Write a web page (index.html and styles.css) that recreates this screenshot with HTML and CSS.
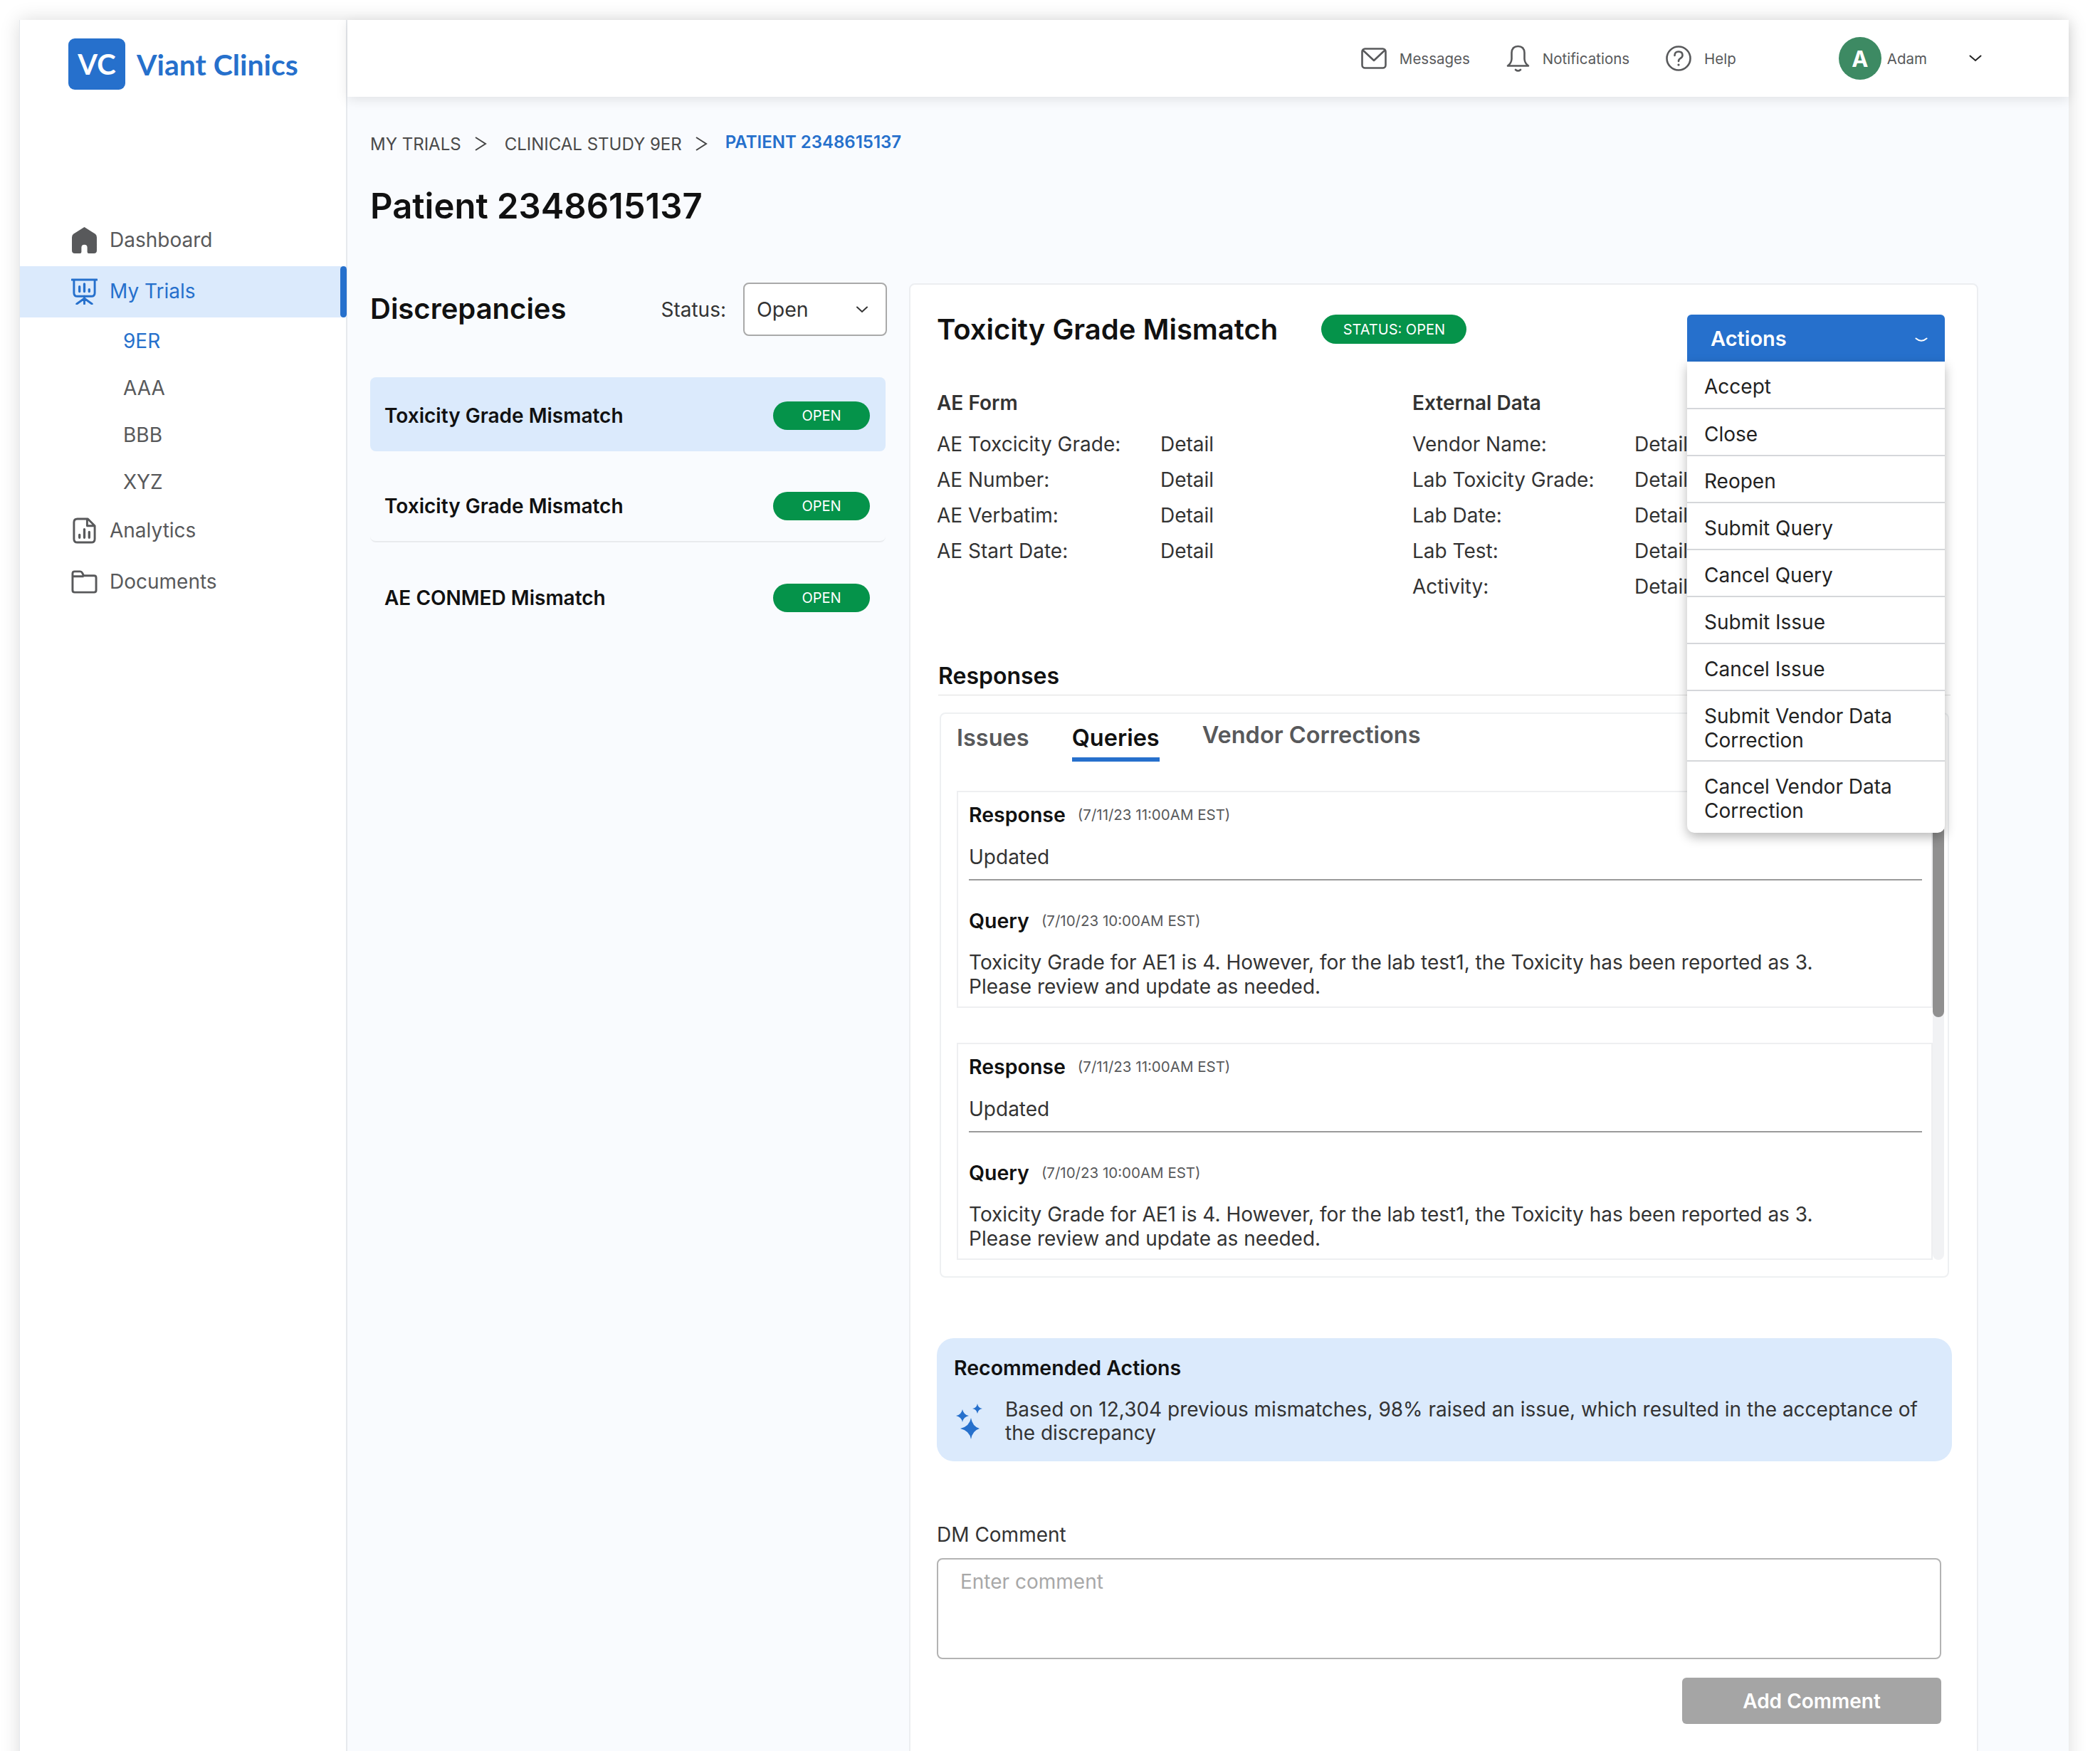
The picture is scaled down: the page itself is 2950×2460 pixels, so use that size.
FILE: index.html
```html
<!DOCTYPE html>
<html lang="en">
<head>
  <meta charset="UTF-8">
  <title>Viant Clinics - Patient 2348615137</title>
  <link rel="stylesheet" href="styles.css">
</head>
<body>
  <div class="frame">
    <!-- Sidebar -->
    <aside class="sidebar">
      <div class="logo">
        <span class="logo-mark">VC</span>
        <span class="logo-name">Viant Clinics</span>
      </div>
      <nav class="nav">
        <a class="nav-row">
          <svg class="nav-icon" viewBox="0 0 36 36"><path fill="#58595b" d="M18 0 L33 9.5 Q35 11 35 14 V32 Q35 36 31 36 H24 Q22 36 22 34 V28 Q22 24 18 24 Q14 24 14 28 V34 Q14 36 12 36 H5 Q1 36 1 32 V14 Q1 11 3 9.5 Z"/></svg>
          Dashboard
        </a>
        <a class="nav-row active">
          <svg class="nav-icon" viewBox="0 0 38 38" fill="none" stroke="#2670cc" stroke-width="3" stroke-linecap="round"><path d="M1 2 H37 M4 2 V21 Q4 26 9 26 H29 Q34 26 34 21 V2"/><path d="M19 26 V37 M19 29 L8 37 M19 29 L30 37"/><path stroke-width="3.4" d="M12 12 V19 M19 8 V19 M26 16 V19"/></svg>
          My Trials
        </a>
        <a class="sub-row current">9ER</a>
        <a class="sub-row">AAA</a>
        <a class="sub-row">BBB</a>
        <a class="sub-row">XYZ</a>
        <a class="nav-row">
          <svg class="nav-icon" viewBox="0 0 36 38" fill="none" stroke="#58595b" stroke-width="3" stroke-linejoin="round" stroke-linecap="round"><path d="M8 2 H23 L33 12 V31 Q33 36 28 36 H8 Q3 36 3 31 V7 Q3 2 8 2 Z M22 3 V12 H32"/><path stroke-width="3.4" d="M11 29 V25 M18 29 V17 M25 29 V21"/></svg>
          Analytics
        </a>
        <a class="nav-row">
          <svg class="nav-icon" viewBox="0 0 38 34" fill="none" stroke="#58595b" stroke-width="3" stroke-linejoin="round"><path d="M2 8 V5 Q2 2 5 2 H13 Q15 2 16 4 L18 8 H33 Q36 8 36 11 V29 Q36 32 33 32 H5 Q2 32 2 29 Z M2 9 H18"/></svg>
          Documents
        </a>
      </nav>
    </aside>

    <div class="main">
      <!-- Top bar -->
      <header class="topbar">
        <a class="top-link">
          <svg class="top-icon" width="36" height="30" viewBox="0 0 36 30" fill="none" stroke="#58595b" stroke-width="2.6" stroke-linejoin="round"><rect x="1.5" y="1.5" width="33" height="27" rx="4"/><path d="M2 3 L18 18 L34 3"/></svg>
          Messages
        </a>
        <a class="top-link">
          <svg class="top-icon" width="33" height="38" viewBox="0 0 33 38" fill="none" stroke="#58595b" stroke-width="2.6" stroke-linecap="round" stroke-linejoin="round"><path d="M16.5 2 Q8 2 7.5 11 V20 Q7 26 2 29.5 H31 Q26 26 25.5 20 V11 Q25 2 16.5 2 Z"/><path d="M13 35 Q16.5 38 20 35"/></svg>
          Notifications
        </a>
        <a class="top-link">
          <svg class="top-icon" width="36" height="36" viewBox="0 0 36 36" fill="none" stroke="#58595b" stroke-width="2.6" stroke-linecap="round"><circle cx="18" cy="18" r="16.5"/><path d="M12.5 14 Q12.5 8.5 18 8.5 Q23.5 8.5 23.5 13.5 Q23.5 16.5 20.5 18 Q18 19.5 18 22"/><path stroke-width="3.2" d="M18 27 V27.1"/></svg>
          Help
        </a>
        <div class="user">
          <span class="avatar">A</span>
          <span class="user-name">Adam</span>
          <svg width="18" height="10" viewBox="0 0 18 10" fill="none" stroke="#222" stroke-width="2" stroke-linecap="round"><path d="M1.5 1.5 L9 8 L16.5 1.5"/></svg>
        </div>
      </header>

      <main class="content">
        <div class="breadcrumb">
          <span>MY TRIALS</span>
          <svg class="crumb-sep" width="20" height="22" viewBox="0 0 20 22" fill="none" stroke="#444" stroke-width="2"><path d="M3 2 L17 11 L3 20"/></svg>
          <span>CLINICAL STUDY 9ER</span>
          <svg class="crumb-sep" width="20" height="22" viewBox="0 0 20 22" fill="none" stroke="#444" stroke-width="2"><path d="M3 2 L17 11 L3 20"/></svg>
          <span class="crumb-current">PATIENT 2348615137</span>
        </div>
        <h1 class="page-title">Patient 2348615137</h1>

        <div class="columns">
          <!-- Discrepancy list -->
          <section class="list-col">
            <div class="list-head">
              <h2 class="list-title">Discrepancies</h2>
              <span class="status-label">Status:</span>
              <div class="select">
                Open
                <svg width="18" height="10" viewBox="0 0 18 10" fill="none" stroke="#333" stroke-width="2" stroke-linecap="round"><path d="M2 1.5 L9 8 L16 1.5"/></svg>
              </div>
            </div>
            <div class="list">
              <div class="list-item selected"><span>Toxicity Grade Mismatch</span><span class="pill">OPEN</span></div>
              <div class="list-item ruled"><span>Toxicity Grade Mismatch</span><span class="pill">OPEN</span></div>
              <div class="list-item"><span>AE CONMED Mismatch</span><span class="pill">OPEN</span></div>
            </div>
          </section>

          <!-- Detail panel -->
          <section class="panel">
            <div class="panel-head">
              <h2 class="panel-title">Toxicity Grade Mismatch</h2>
              <span class="status-pill">STATUS: OPEN</span>
              <div class="actions">
                <div class="actions-btn">
                  Actions
                  <svg class="actions-chevron" width="18" height="8" viewBox="0 0 18 8" fill="none" stroke="#fff" stroke-width="2" stroke-linecap="round"><path d="M1.5 1.5 Q9 8 16.5 1.5"/></svg>
                </div>
                <ul class="actions-menu">
                  <li>Accept</li>
                  <li>Close</li>
                  <li>Reopen</li>
                  <li>Submit Query</li>
                  <li>Cancel Query</li>
                  <li>Submit Issue</li>
                  <li>Cancel Issue</li>
                  <li>Submit Vendor Data Correction</li>
                  <li>Cancel Vendor Data Correction</li>
                </ul>
              </div>
            </div>

            <div class="data">
              <div class="data-col ae">
                <h3 class="data-title">AE Form</h3>
                <dl class="data-rows">
                  <dt>AE Toxcicity Grade:</dt><dd>Detail</dd>
                  <dt>AE Number:</dt><dd>Detail</dd>
                  <dt>AE Verbatim:</dt><dd>Detail</dd>
                  <dt>AE Start Date:</dt><dd>Detail</dd>
                </dl>
              </div>
              <div class="data-col ext">
                <h3 class="data-title">External Data</h3>
                <dl class="data-rows">
                  <dt>Vendor Name:</dt><dd>Detail</dd>
                  <dt>Lab Toxicity Grade:</dt><dd>Detail</dd>
                  <dt>Lab Date:</dt><dd>Detail</dd>
                  <dt>Lab Test:</dt><dd>Detail</dd>
                  <dt>Activity:</dt><dd>Detail</dd>
                </dl>
              </div>
            </div>

            <h3 class="responses-title">Responses</h3>
            <div class="tabs-card">
              <div class="tabs">
                <span class="tab">Issues</span>
                <span class="tab on">Queries</span>
                <span class="tab vendor">Vendor Corrections</span>
              </div>
              <div class="thread-wrap">
                <div class="threads">
                  <article class="thread">
                    <div class="entry-head"><b>Response</b><span class="stamp">(7/11/23 11:00AM EST)</span></div>
                    <p class="entry-reply">Updated</p>
                    <div class="entry-head query"><b>Query</b><span class="stamp">(7/10/23 10:00AM EST)</span></div>
                    <p class="entry-body">Toxicity Grade for AE1 is 4. However, for the lab test1, the Toxicity has been reported as 3.<br>Please review and update as needed.</p>
                  </article>
                  <article class="thread">
                    <div class="entry-head"><b>Response</b><span class="stamp">(7/11/23 11:00AM EST)</span></div>
                    <p class="entry-reply">Updated</p>
                    <div class="entry-head query"><b>Query</b><span class="stamp">(7/10/23 10:00AM EST)</span></div>
                    <p class="entry-body">Toxicity Grade for AE1 is 4. However, for the lab test1, the Toxicity has been reported as 3.<br>Please review and update as needed.</p>
                  </article>
                </div>
                <div class="scroll-track"><div class="scroll-thumb"></div></div>
              </div>
            </div>

            <div class="recommend">
              <h3 class="recommend-title">Recommended Actions</h3>
              <div class="recommend-row">
                <svg class="sparkle" width="38" height="50" viewBox="0 0 38 50" fill="#2670cc"><path d="M9 8 Q10.5 15.5 18 17 Q10.5 18.5 9 26 Q7.5 18.5 0 17 Q7.5 15.5 9 8 Z"/><path d="M30 0 Q31 6 37 7 Q31 8 30 14 Q29 8 23 7 Q29 6 30 0 Z"/><path d="M21 20 Q23 32 33 35 Q23 38 21 50 Q19 38 6 35 Q19 32 21 20 Z"/></svg>
                <p>Based on 12,304 previous mismatches, 98% raised an issue, which resulted in the acceptance of the discrepancy</p>
              </div>
            </div>

            <label class="comment-label" for="dm-comment">DM Comment</label>
            <textarea class="comment-box" id="dm-comment" placeholder="Enter comment"></textarea>
            <div class="comment-foot"><span class="add-btn">Add Comment</span></div>
          </section>
        </div>
      </main>
    </div>
  </div>
</body>
</html>
```

FILE: styles.css
```css
/* Base */
* {
  margin: 0;
  padding: 0;
  box-sizing: border-box;
}
html, body {
  height: 100%;
  overflow: hidden;
  background: #fff;
  font-family: Inter, "Noto Sans", sans-serif;
  color: #333;
}

/* Outer app frame, runs past the bottom of the window */
.frame {
  display: flex;
  width: 2879px;
  height: 2500px;
  margin: 28px 0 0 27px;
  background: #f9fbfe;
  box-shadow: 0 0 26px rgba(0, 0, 0, 0.14);
}

/* Sidebar */
.sidebar {
  width: 461px;
  flex-shrink: 0;
  padding-top: 26px;
  background: #fff;
  border-right: 2px solid #e6e9ed;
  border-left: 1px solid #e6e9ed;
}
.logo {
  display: flex;
  align-items: center;
  gap: 16px;
  padding-left: 68px;
}
.logo-mark {
  display: flex;
  align-items: center;
  justify-content: center;
  width: 80px;
  height: 72px;
  border-radius: 9px;
  background: #2670cc;
  color: #fff;
  font-family: Lato, sans-serif;
  font-size: 40px;
  font-weight: 700;
}
.logo-name {
  color: #2670cc;
  font-family: Lato, sans-serif;
  font-size: 41px;
  font-weight: 700;
}
.nav {
  margin-top: 176px;
}
.nav-row {
  display: flex;
  align-items: center;
  height: 72px;
  padding: 0 0 2px 72px;
  font-size: 28px;
  color: #58595b;
}
.nav-icon {
  width: 37px;
  height: 37px;
  margin-right: 17px;
  flex-shrink: 0;
}
.nav-row.active {
  position: relative;
  margin-right: -1px;
  background: #dbeafc;
  color: #2670cc;
}
.nav-row.active::after {
  content: "";
  position: absolute;
  right: 0;
  top: 0;
  width: 9px;
  height: 100%;
  border-radius: 5px;
  background: #2670cc;
}
.sub-row {
  display: flex;
  align-items: center;
  height: 66px;
  padding-left: 145px;
  font-size: 28px;
  color: #58595b;
}
.sub-row.current {
  color: #2670cc;
}

/* Top bar */
.main {
  flex: 1;
  min-width: 0;
}
.topbar {
  display: flex;
  align-items: center;
  height: 108px;
  padding-right: 122px;
  justify-content: flex-end;
  background: #fff;
  box-shadow: 0 4px 16px rgba(0, 0, 0, 0.1);
  font-size: 20.5px;
  color: #58595b;
}
.top-link {
  display: flex;
  align-items: center;
  gap: 18px;
  margin-right: 51px;
}
.user {
  display: flex;
  align-items: center;
  margin-left: 93px;
}
.avatar {
  display: flex;
  align-items: center;
  justify-content: center;
  width: 60px;
  height: 60px;
  border-radius: 50%;
  background: #3d8a63;
  color: #fff;
  font-size: 31px;
  font-weight: 700;
}
.user-name {
  margin: 0 59px 0 8px;
}

/* Page content */
.content {
  padding: 50px 0 0 32px;
}
.breadcrumb {
  display: flex;
  align-items: center;
  gap: 17px;
  height: 32px;
  font-size: 24px;
  color: #4a4a4a;
}
.crumb-sep {
  margin-right: 7px;
}
.crumb-current {
  margin-top: -6px;
  color: #2670cc;
  font-weight: 600;
}
.page-title {
  margin-top: 42px;
  font-size: 49px;
  line-height: 60px;
  font-weight: 600;
  color: #111;
}
.columns {
  display: flex;
  align-items: flex-start;
  gap: 33px;
  margin-top: 76px;
}

/* Discrepancy list */
.list-col {
  width: 724px;
  flex-shrink: 0;
}
.list-head {
  display: flex;
  align-items: center;
  height: 75px;
}
.list-title {
  flex: 1;
  font-size: 40px;
  font-weight: 600;
  color: #111;
}
.status-label {
  margin: 2px 24px 0 0;
  font-size: 28px;
}
.select {
  display: flex;
  align-items: center;
  justify-content: space-between;
  width: 202px;
  height: 75px;
  margin: 2px -2px 0 0;
  padding: 0 24px 0 17px;
  background: #fff;
  border: 2px solid #a9a9a9;
  border-radius: 8px;
  font-size: 28.5px;
}
.list {
  display: flex;
  flex-direction: column;
  gap: 24px;
  margin-top: 59px;
}
.list-item {
  display: flex;
  align-items: center;
  justify-content: space-between;
  height: 104px;
  padding: 4px 22px 0 20px;
  border-radius: 8px;
  font-size: 28px;
  font-weight: 600;
  color: #111;
}
.list-item.selected {
  background: #dbeafc;
}
.list-item.ruled {
  border-bottom: 2px solid #e9ebee;
}
.pill {
  display: flex;
  align-items: center;
  justify-content: center;
  width: 136px;
  height: 40px;
  border-radius: 20px;
  background: #05934a;
  color: #fff;
  font-size: 20px;
  font-weight: 400;
}

/* Detail panel */
.panel {
  width: 1502px;
  margin-top: 2px;
  padding: 42px 45px 60px 37px;
  background: #fff;
  border: 2px solid #eceef1;
  border-radius: 8px;
}
.panel-head {
  display: flex;
  align-items: flex-start;
  height: 66px;
}
.panel-title {
  font-size: 40px;
  line-height: 42px;
  font-weight: 600;
  color: #111;
}
.status-pill {
  display: flex;
  align-items: center;
  justify-content: center;
  width: 204px;
  height: 41px;
  margin-left: 61px;
  border-radius: 21px;
  background: #05934a;
  color: #fff;
  font-size: 20px;
}

/* Actions dropdown */
.actions {
  position: relative;
  z-index: 5;
  margin-left: auto;
  width: 362px;
}
.actions-btn {
  display: flex;
  align-items: center;
  justify-content: space-between;
  height: 66px;
  padding: 0 24px 0 33px;
  border-radius: 6px 6px 0 0;
  background: #2670cc;
  color: #fff;
  font-size: 29px;
  font-weight: 600;
}
.actions-chevron {
  margin-top: 6px;
}
.actions-menu {
  position: absolute;
  top: 66px;
  left: 0;
  width: 100%;
  list-style: none;
  background: #fff;
  border-radius: 0 0 10px 10px;
  box-shadow: 0 6px 16px rgba(0, 0, 0, 0.28);
  font-size: 28px;
  line-height: 34px;
  color: #222;
}
.actions-menu li {
  padding: 18px 24px 12px;
  border-bottom: 2px solid #d5d7da;
}
.actions-menu li:first-child {
  padding-bottom: 13px;
}
.actions-menu li:nth-child(8) {
  padding-bottom: 11px;
}
.actions-menu li:last-child {
  padding-bottom: 14px;
  border-bottom: 0;
}

/* AE form / external data */
.data {
  display: flex;
  margin-top: 42px;
  font-size: 28px;
}
.data-col.ae {
  width: 668px;
  --label-w: 314px;
}
.data-col.ext {
  flex: 1;
  --label-w: 312px;
}
.data-title {
  margin-bottom: 17px;
  font-size: 28px;
  line-height: 32px;
  font-weight: 600;
}
.data-rows {
  display: grid;
  grid-template-columns: var(--label-w) 1fr;
  grid-auto-rows: 50px;
  align-items: center;
}

/* Responses */
.responses-title {
  margin: 79px -8px 0 2px;
  padding-bottom: 4px;
  border-bottom: 1px solid #dedede;
  font-size: 32px;
  line-height: 44px;
  font-weight: 600;
  color: #111;
}
.tabs-card {
  margin: 24px -6px 0 4px;
  height: 794px;
  padding: 12px 5px 0 22px;
  border: 2px solid #eef0f2;
  border-radius: 8px;
}
.tabs {
  display: flex;
  align-items: flex-start;
  gap: 60px;
  margin-bottom: 41px;
}
.tab {
  height: 55px;
  font-size: 32.5px;
  line-height: 44px;
  font-weight: 600;
  color: #58595b;
}
.tab.on {
  border-bottom: 6px solid #2670cc;
  color: #111;
}
.tab.vendor {
  margin-top: -4px;
}
.thread-wrap {
  display: flex;
  height: 659px;
}
.threads {
  flex: 1;
  min-width: 0;
  display: flex;
  flex-direction: column;
  gap: 49px;
}
.thread {
  height: 305px;
  padding: 11px 13px 0 15px;
  border: 2px solid #eeeff1;
  font-size: 28px;
}
.entry-head {
  display: flex;
  align-items: center;
  gap: 17px;
  height: 40px;
}
.entry-head b {
  font-size: 28.5px;
  font-weight: 600;
  color: #111;
}
.stamp {
  font-size: 20.5px;
  color: #58595b;
}
.entry-reply {
  margin-top: 20px;
  padding-bottom: 11px;
  border-bottom: 2px solid #9a9a9a;
  line-height: 40px;
}
.entry-head.query {
  margin-top: 36px;
}
.entry-body {
  margin-top: 22px;
  line-height: 34px;
}
.scroll-track {
  width: 16px;
  flex-shrink: 0;
  border-radius: 0 0 8px 8px;
  background: #f1f2f4;
}
.scroll-thumb {
  height: 318px;
  border-radius: 0 0 8px 8px;
  background: #909090;
}

/* Recommended actions */
.recommend {
  height: 173px;
  margin: 85px -10px 0 0;
  padding: 22px 26px 0 24px;
  border-radius: 24px;
  background: #dbeafc;
}
.recommend-title {
  font-size: 28.5px;
  line-height: 40px;
  font-weight: 600;
  color: #111;
}
.recommend-row {
  display: flex;
  align-items: flex-start;
  gap: 31px;
  margin-top: 22px;
  font-size: 28px;
  line-height: 33px;
}
.sparkle {
  flex-shrink: 0;
  margin: 8px 0 0 3px;
}

/* DM comment */
.comment-label {
  display: block;
  margin-top: 85px;
  font-size: 28px;
  line-height: 36px;
}
.comment-box {
  display: block;
  width: 1411px;
  height: 142px;
  margin-top: 15px;
  padding: 13px 31px;
  border: 2px solid #b3b3b3;
  border-radius: 8px;
  resize: none;
  outline: 0;
  font-family: inherit;
  font-size: 28px;
  line-height: 36px;
  color: #333;
}
.comment-box::placeholder {
  color: #a8a8a8;
}
.comment-foot {
  display: flex;
  justify-content: flex-end;
  width: 1411px;
  margin-top: 26px;
}
.add-btn {
  display: flex;
  align-items: center;
  justify-content: center;
  width: 364px;
  height: 65px;
  border-radius: 6px;
  background: #a5a5a5;
  color: #fff;
  font-size: 28px;
  font-weight: 600;
}
```
